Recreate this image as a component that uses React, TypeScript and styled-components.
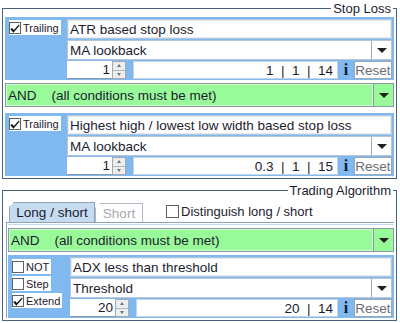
import React from 'react';
import styled, { createGlobalStyle } from 'styled-components';

const GlobalStyle = createGlobalStyle`
  html, body { margin: 0; padding: 0; background: #fff; }
  body {
    font-family: 'Liberation Sans', Arial, sans-serif;
    font-size: 13px;
    color: #1c1c30;
  }
`;

const Page = styled.div`
  width: 400px;
  height: 323px;
  overflow: hidden;
  padding: 0 3px 0 2px;
  box-sizing: border-box;
`;

const Group = styled.fieldset<{ $top?: number }>`
  margin: ${({ $top }) => $top ?? 0}px 0 0;
  padding: 0 2px 2px;
  border: 1px solid #44617f;
  min-width: 0;
`;

const Legend = styled.legend`
  margin-left: auto;
  margin-right: 1px;
  padding: 0 2px;
  line-height: 17px;
  font-size: 13px;
  color: #1c1c30;
`;

const Condition = styled.div<{ $top?: number }>`
  display: flex;
  background: #80b8f0;
  padding: 2px 2px 1px 0;
  margin-top: ${({ $top }) => $top ?? 0}px;
`;

const Options = styled.div<{ $pad: number }>`
  width: 62px;
  flex: none;
  display: flex;
  flex-direction: column;
  align-items: flex-start;
  gap: 2px;
  padding: ${({ $pad }) => $pad}px 0 0 4px;
  box-sizing: border-box;
`;

const CheckItem = styled.label`
  display: flex;
  align-items: center;
  height: 15px;
  background: #fff;
  padding-right: 2px;
  font-size: 11px;
  color: #1c1c30;
`;

const Box = styled.span`
  width: 12px;
  height: 12px;
  box-sizing: border-box;
  border: 1px solid #5c6068;
  background: #fff;
  margin-right: 2px;
  display: flex;
  align-items: center;
  justify-content: center;
`;

const Fields = styled.div`
  flex: 1;
  min-width: 0;
  display: flex;
  flex-direction: column;
  gap: 1px;
`;

const TextField = styled.div`
  height: 20px;
  box-sizing: border-box;
  border: 1px solid #b4c6d8;
  box-shadow: inset 0 0 0 1px #e2eaf3;
  background: #fff;
  padding: 0 2px;
  display: flex;
  align-items: center;
  white-space: nowrap;
  overflow: hidden;
  font-size: 13.5px;
`;

const Combo = styled.div<{ $green?: boolean; $h?: number }>`
  height: ${({ $h }) => $h ?? 20}px;
  box-sizing: border-box;
  display: flex;
  border: 1px solid ${({ $green }) => ($green ? '#8c98a4' : '#b4c6d8')};
  background: ${({ $green }) => ($green ? '#99fa99' : '#fff')};
`;

const ComboText = styled.div`
  flex: 1;
  display: flex;
  align-items: center;
  padding: 0 2px;
  white-space: pre;
  font-size: 13.5px;
  box-shadow: inset 0 0 0 1px rgba(255, 255, 255, 0.5);
`;

const DropButton = styled.div<{ $green?: boolean }>`
  width: 19px;
  flex: none;
  border-left: 1px solid ${({ $green }) => ($green ? '#8c98a4' : '#a0aab4')};
  display: flex;
  align-items: center;
  justify-content: center;
  &::after {
    content: '';
    border-left: 5px solid transparent;
    border-right: 5px solid transparent;
    border-top: 5px solid #202020;
  }
`;

const SpinRow = styled.div`
  height: 18px;
  display: flex;
  align-items: stretch;
`;

const SpinValue = styled.div`
  width: 45px;
  box-sizing: border-box;
  background: #fff;
  border-bottom: 1px solid #8a96a2;
  display: flex;
  align-items: center;
  justify-content: flex-end;
  padding-right: 2px;
  font-size: 13.5px;
`;

const SpinButtons = styled.div`
  width: 14px;
  display: flex;
  flex-direction: column;
  border: 1px solid #a4aab0;
  box-sizing: border-box;
`;

const SpinButton = styled.div<{ $down?: boolean }>`
  flex: 1;
  background: #eceef0;
  display: flex;
  align-items: center;
  justify-content: center;
  & + & { border-top: 1px solid #b4b8bc; }
  &::after {
    content: '';
    border-left: 2.5px solid transparent;
    border-right: 2.5px solid transparent;
    ${({ $down }) => ($down ? 'border-top' : 'border-bottom')}: 3px solid #707478;
  }
`;

const Range = styled.div`
  flex: 1;
  margin-left: 7px;
  background: #fff;
  border: 1px solid #c4d4e4;
  display: flex;
  align-items: center;
  justify-content: flex-end;
  padding-right: 4px;
  white-space: pre;
  font-size: 13.5px;
`;

const Info = styled.span`
  font-family: 'Liberation Serif', 'Times New Roman', serif;
  font-weight: bold;
  font-size: 16px;
  width: 14px;
  text-align: center;
  color: #1a1a28;
  align-self: center;
  margin: 0 1px;
`;

const Reset = styled.div`
  width: 38px;
  box-sizing: border-box;
  background: #fff;
  border: 1px solid #9aa6b2;
  color: #6c6c74;
  display: flex;
  align-items: center;
  justify-content: center;
  font-size: 13.5px;
`;

const AndRow = styled.div<{ $top: number }>`
  margin-top: ${({ $top }) => $top}px;
`;

const TabBar = styled.div`
  display: flex;
  align-items: flex-end;
  padding: 3px 0 0 4px;
  height: 23px;
  box-sizing: border-box;
`;

const Tab = styled.div<{ $active?: boolean }>`
  height: ${({ $active }) => ($active ? 20 : 19)}px;
  width: ${({ $active }) => ($active ? 86 : 48)}px;
  box-sizing: border-box;
  display: flex;
  align-items: center;
  justify-content: center;
  background: ${({ $active }) => ($active ? '#c6dbf0' : '#fff')};
  color: ${({ $active }) => ($active ? '#1c1c30' : '#a8a8b0')};
  border: 1px solid ${({ $active }) => ($active ? '#8fa3b8' : '#b0bac4')};
  border-bottom: none;
  clip-path: polygon(5px 0, 100% 0, 100% 100%, 0 100%, 0 5px);
  font-size: 13.5px;
`;

const Distinguish = styled.label`
  display: flex;
  align-items: center;
  margin: 0 0 3px 23px;
  font-size: 13px;
  ${Box} { width: 13px; height: 13px; margin-right: 2px; }
`;

const TabPanel = styled.div`
  border-top: 1px solid #8ea2ba;
  border-left: 1px solid #8ea2ba;
  margin-left: 1px;
  padding: 1px 0 0 1px;
`;

const PanelInner = styled.div`
  border-top: 1px solid #c4d6f0;
  padding-top: 3px;
`;

const Check = () => (
  <svg width="10" height="10" viewBox="0 0 10 10">
    <path d="M1 5.2 L3.4 7.6 L8.8 1.6 L9.6 2.4 L3.6 9.4 L3.2 9.4 L0.4 6.2 Z" fill="#141414" />
    <path d="M1.2 5.6 L3.4 8.4 L4.2 7.6 L2.2 5 Z" fill="#141414" />
  </svg>
);

const CheckBox: React.FC<{ label: string; checked?: boolean }> = ({ label, checked }) => (
  <CheckItem>
    <Box>{checked && <Check />}</Box>
    {label}
  </CheckItem>
);

const Spinner: React.FC<{ value: string; range: string }> = ({ value, range }) => (
  <SpinRow>
    <SpinValue>{value}</SpinValue>
    <SpinButtons>
      <SpinButton />
      <SpinButton $down />
    </SpinButtons>
    <Range>{range}</Range>
    <Info>i</Info>
    <Reset>Reset</Reset>
  </SpinRow>
);

const AndCombo: React.FC<{ h?: number }> = ({ h }) => (
  <Combo $green $h={h}>
    <ComboText>{'AND    (all conditions must be met)'}</ComboText>
    <DropButton $green />
  </Combo>
);

type ConditionProps = {
  options: { label: string; checked?: boolean }[];
  title: string;
  param: string;
  value: string;
  range: string;
  top?: number;
  pad: number;
};

const ConditionBlock: React.FC<ConditionProps> = ({ options, title, param, value, range, top, pad }) => (
  <Condition $top={top}>
    <Options $pad={pad}>
      {options.map((o) => (
        <CheckBox key={o.label} label={o.label} checked={o.checked} />
      ))}
    </Options>
    <Fields>
      <TextField>{title}</TextField>
      <Combo>
        <ComboText>{param}</ComboText>
        <DropButton />
      </Combo>
      <Spinner value={value} range={range} />
    </Fields>
  </Condition>
);

const App: React.FC = () => (
  <Page>
    <GlobalStyle />
    <Group>
      <Legend>Stop Loss</Legend>
      <ConditionBlock
        pad={1}
        options={[{ label: 'Trailing', checked: true }]}
        title="ATR based stop loss"
        param="MA lookback"
        value="1"
        range={'1  |  1  |  14'}
      />
      <AndRow $top={3}>
        <AndCombo h={24} />
      </AndRow>
      <ConditionBlock
        top={6}
        pad={1}
        options={[{ label: 'Trailing', checked: true }]}
        title="Highest high / lowest low width based stop loss"
        param="MA lookback"
        value="1"
        range={'0.3  |  1  |  15'}
      />
    </Group>
    <Group $top={3}>
      <Legend>Trading Algorithm</Legend>
      <TabBar>
        <Tab $active>Long / short</Tab>
        <Tab>Short</Tab>
        <Distinguish>
          <Box />
          Distinguish long / short
        </Distinguish>
      </TabBar>
      <TabPanel>
        <PanelInner>
          <AndCombo h={24} />
          <ConditionBlock
            top={3}
            pad={2}
            options={[{ label: 'NOT' }, { label: 'Step' }, { label: 'Extend', checked: true }]}
            title="ADX less than threshold"
            param="Threshold"
            value="20"
            range={'20  |  14'}
          />
        </PanelInner>
      </TabPanel>
    </Group>
  </Page>
);

export default App;
